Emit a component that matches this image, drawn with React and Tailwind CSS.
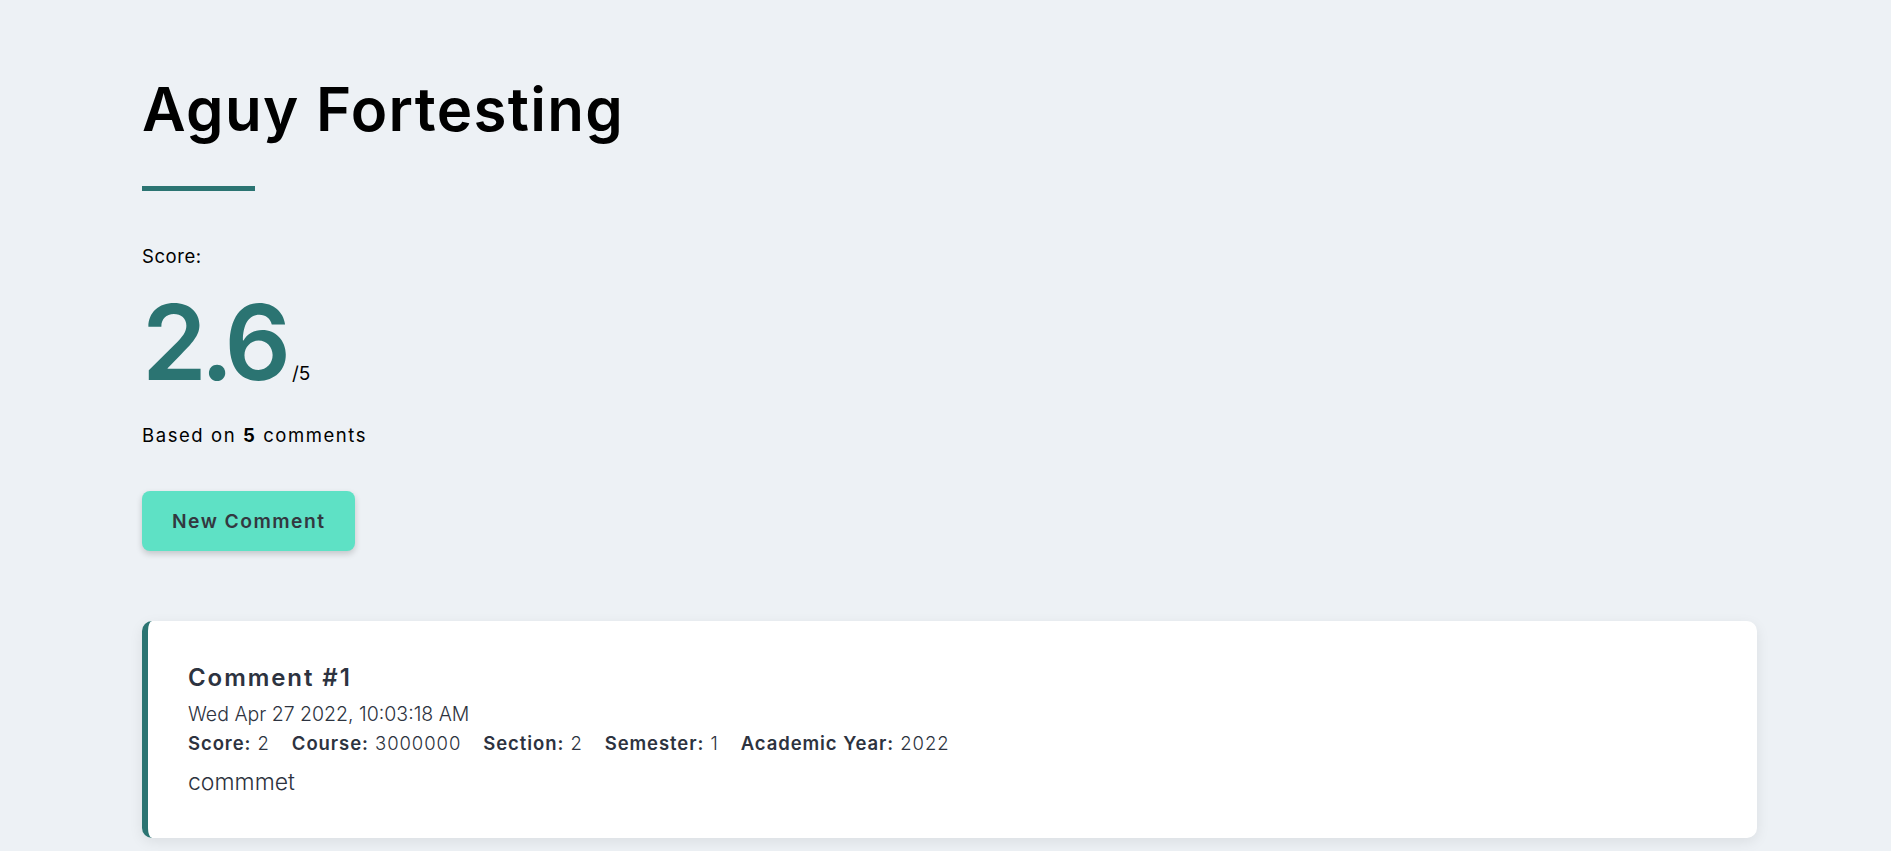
export default function App() {
  const meta = [
    ['Score:', '2'],
    ['Course:', '3000000'],
    ['Section:', '2'],
    ['Semester:', '1'],
    ['Academic Year:', '2022'],
  ];

  return (
    <div className="min-h-screen bg-[#edf1f5] pl-[142px] pr-[134px] pt-[73px] pb-[12px] text-black" style={{ fontFamily: 'Inter, "Open Sans", sans-serif' }}>
      {/* header */}
      <h1 className="text-[60px] font-semibold leading-[72px] tracking-[0.022em]">Aguy Fortesting</h1>
      <div className="mt-[41px] h-[5px] w-[113px] bg-[#2b7472]" />

      {/* score */}
      <p className="mt-[52px] text-[18.5px] leading-[26px] tracking-[0.03em]">Score:</p>
      <div className="mt-[23px] flex items-baseline">
        <span className="text-[104px] font-semibold leading-[100px] tracking-[-0.06em] text-[#2b7472]">2.6</span>
        <span className="ml-[7px] text-[19px] leading-[22px]">/5</span>
      </div>
      <p className="mt-[30px] text-[18.5px] leading-[26px] tracking-[0.085em]">
        Based on <b className="font-bold">5</b> comments
      </p>

      <button className="mt-[43px] h-[60px] rounded-[8px] bg-[#5ee1c5] px-[30px] text-[19.3px] font-semibold tracking-[0.075em] text-[#333840] shadow-[0_3px_6px_rgba(0,0,0,0.18)]">
        New Comment
      </button>

      {/* comments */}
      <div className="mt-[70px] rounded-[10px] border-l-[6px] border-[#2b7472] bg-white pl-[40px] pr-[40px] pt-[41px] pb-[40px] text-[#2d3340] shadow-[0_4px_14px_rgba(0,0,0,0.08)]">
        <h3 className="text-[24px] font-semibold leading-[32px] tracking-[0.08em]">Comment #1</h3>
        <p className="mt-[6px] text-[19.5px] font-light leading-[28px]">Wed Apr 27 2022, 10:03:18 AM</p>
        <div className="mt-[1px] flex gap-[22px] text-[18.5px] leading-[28px] tracking-[0.05em]">
          {meta.map(([k, v]) => (
            <span key={k}>
              <b className="font-semibold">{k}</b> <span className="font-light">{v}</span>
            </span>
          ))}
        </div>
        <p className="mt-[9px] text-[23px] font-light leading-[32px]">commmet</p>
      </div>
    </div>
  );
}
